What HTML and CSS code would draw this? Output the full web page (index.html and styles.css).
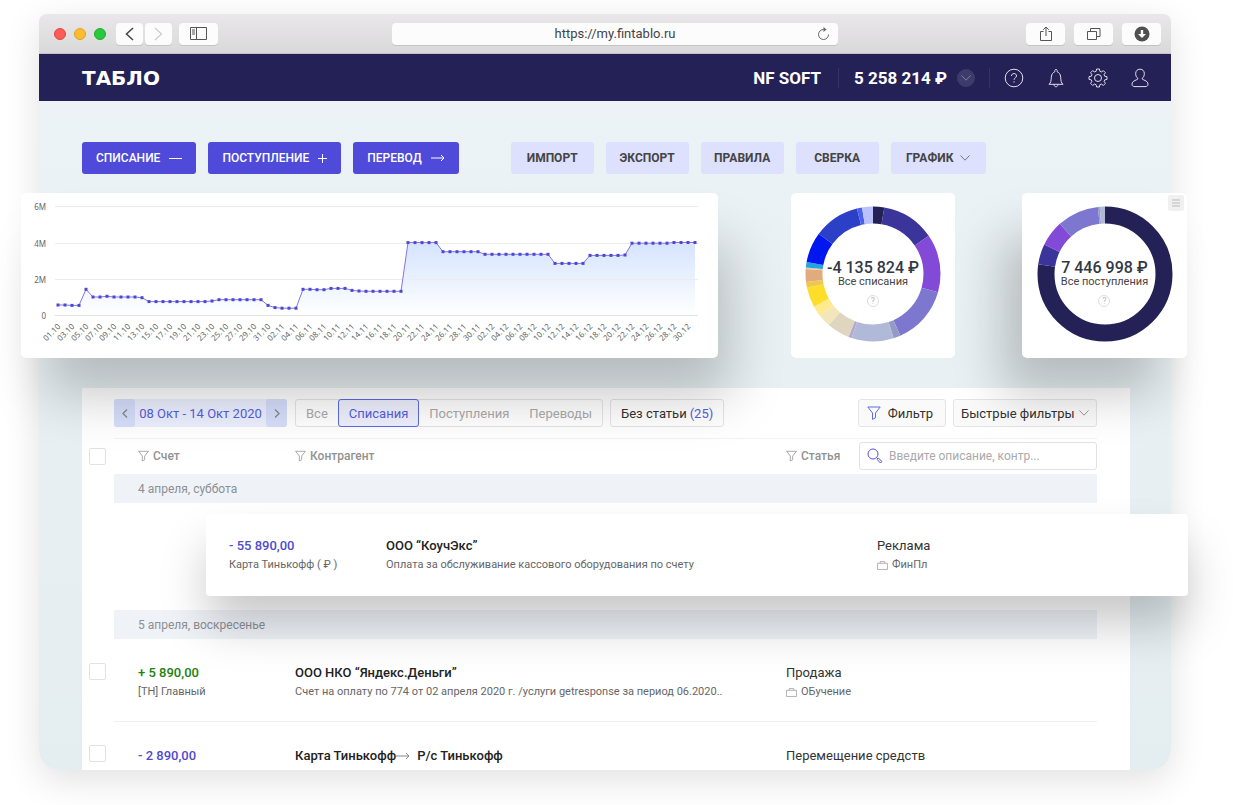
FILE: index.html
```html
<!DOCTYPE html>
<html lang="ru">
<head>
<meta charset="utf-8">
<meta name="viewport" content="width=device-width, initial-scale=1">
<title>Табло — NF SOFT</title>
<link rel="stylesheet" href="styles.css">
</head>
<body>
<svg class="sprite" aria-hidden="true">
  <symbol id="funnel" viewBox="0 0 14 14"><path d="M.8 1h12.400l-4.700 6v4.800l-3 1.500V7z" fill="none" stroke="currentColor" stroke-linejoin="round"/></symbol>
  <symbol id="case" viewBox="0 0 12 10"><path d="M.5 2.500h11v7H.5zM3.500 2.500v-2h5v2" fill="none" stroke="currentColor"/></symbol>
  <symbol id="down" viewBox="0 0 10 6"><path d="M.5.500 5 5.200 9.500.500" fill="none" stroke="currentColor"/></symbol>
  <symbol id="arrow" viewBox="0 0 14 8"><path d="M0 4h13M10 1l3 3-3 3" fill="none" stroke="currentColor"/></symbol>
</svg>

<div class="window">
  <div class="chrome">
    <div class="chrome-left">
      <div class="lights"><i class="light red"></i><i class="light yellow"></i><i class="light green"></i></div>
      <div class="history">
        <button class="chrome-btn narrow" aria-label="Назад"><svg width="9" height="14" viewBox="0 0 9 14"><path d="M8 1 1.500 7 8 13" fill="none" stroke="#444" stroke-width="1.500"/></svg></button>
        <button class="chrome-btn narrow" aria-label="Вперёд"><svg width="9" height="14" viewBox="0 0 9 14"><path d="m1 1 6.500 6L1 13" fill="none" stroke="#ccc" stroke-width="1.200"/></svg></button>
      </div>
      <button class="chrome-btn" aria-label="Боковая панель"><svg width="17" height="13" viewBox="0 0 17 13"><path d="M.5.500h16v12H.5zM6.500.500v12M2 3h3M2 5h3M2 7h3" fill="none" stroke="#555"/></svg></button>
    </div>
    <div class="address">
      <input type="text" value="https://my.fintablo.ru" aria-label="Адрес">
      <svg class="reload" width="13" height="14" viewBox="0 0 13 14"><path d="M11.500 7.500a5 5 0 1 1-5-5H8" fill="none" stroke="#666"/><path d="M6.500 0 9.500 2.500 6.500 5z" fill="#666"/></svg>
    </div>
    <div class="chrome-right">
      <button class="chrome-btn" aria-label="Поделиться"><svg width="14" height="16" viewBox="0 0 14 16"><path d="M4.500 5.500h-3v9h11v-9h-3M7 10V1M4.200 3.800 7 1l2.800 2.800" fill="none" stroke="#555"/></svg></button>
      <button class="chrome-btn" aria-label="Вкладки"><svg width="14" height="14" viewBox="0 0 14 14"><path d="M.5 4.500h9v8h-9zM3.500 4.500v-3h9.500v8H9.500" fill="none" stroke="#555"/></svg></button>
      <button class="chrome-btn" aria-label="Загрузки"><svg width="16" height="16" viewBox="0 0 16 16"><circle cx="8" cy="8" r="7.500" fill="#505050"/><path d="M6.800 4h2.400v4H12l-4 4-4-4h2.800z" fill="#fff"/></svg></button>
    </div>
  </div>

  <header class="nav">
    <a class="logo" href="#">ТАБЛО</a>
    <div class="company">NF SOFT</div>
    <div class="balance">5 258 214 ₽ <button class="round" aria-label="Счета"><svg width="10" height="6"><use href="#down"/></svg></button></div>
    <nav class="nav-icons">
      <a href="#" aria-label="Помощь"><svg width="20" height="20" viewBox="0 0 20 20"><circle cx="10" cy="10" r="8.800"/><path d="M7.500 8c0-3.300 5-3.300 5 0 0 1.800-2.500 2-2.500 3.800M10 13.300v1.300"/></svg></a>
      <a href="#" aria-label="Уведомления"><svg width="20" height="20" viewBox="0 0 20 20"><path d="M3 16.300h14c-2-1.800-2-3-2.300-7-.2-3.500-2-5-3.500-5.500C11.500.500 8.500.500 8.800 3.800 7.300 4.300 5.500 5.800 5.300 9.300c-.3 4-.3 5.200-2.300 7zM8 16.500c.2 3 3.800 3 4 0"/></svg></a>
      <a href="#" aria-label="Настройки"><svg width="20" height="20" viewBox="0 0 20 20"><path d="M8.600 1h2.800l.5 2.300 1.500.6 2-1.200 2 2-1.300 2 .6 1.500 2.300.5v2.700l-2.300.5-.6 1.500 1.300 2-2 2-2-1.300-1.500.6-.5 2.300H8.600l-.5-2.300-1.500-.6-2 1.300-2-2 1.300-2-.6-1.500L1 11.400V8.700l2.300-.5.600-1.500-1.300-2 2-2 2 1.200 1.500-.6z" stroke-linejoin="round"/><circle cx="10" cy="10" r="3.500"/></svg></a>
      <a href="#" aria-label="Профиль"><svg width="20" height="20" viewBox="0 0 20 20"><path d="M10 1.200c5.500 0 5.300 7.300 2 9.400 0 1.500 6 1.600 6 5.600 0 1.800-1.200 2.400-3 2.400H5c-1.800 0-3-.6-3-2.400 0-4 6-4.100 6-5.600C4.700 8.500 4.500 1.200 10 1.200z"/></svg></a>
    </nav>
  </header>

  <main class="content">
    <div class="actions">
      <div class="group">
        <button class="btn primary">СПИСАНИЕ <svg width="13" height="13" viewBox="0 0 13 13"><path d="M0 6.500h13" stroke="currentColor"/></svg></button>
        <button class="btn primary">ПОСТУПЛЕНИЕ <svg width="9" height="9" viewBox="0 0 9 9"><path d="M0 4.500h9M4.500 0v9" stroke="currentColor"/></svg></button>
        <button class="btn primary">ПЕРЕВОД <svg width="14" height="8"><use href="#arrow"/></svg></button>
      </div>
      <div class="group">
        <button class="btn">ИМПОРТ</button>
        <button class="btn">ЭКСПОРТ</button>
        <button class="btn">ПРАВИЛА</button>
        <button class="btn">СВЕРКА</button>
        <button class="btn wide">ГРАФИК <svg width="10" height="6"><use href="#down"/></svg></button>
      </div>
    </div>

    <section class="widgets">
      <div class="card chart"><svg id="chart" viewBox="0 0 697 165" role="img" aria-label="График остатка"></svg></div>
      <div class="card donut">
        <svg id="expenses" viewBox="0 0 136 136"></svg>
        <div class="donut-text"><strong>-4 135 824 ₽</strong><span>Все списания</span><i class="hint">?</i></div>
      </div>
      <div class="card donut lifted">
        <svg id="income" viewBox="0 0 136 136"></svg>
        <div class="donut-text"><strong>7 446 998 ₽</strong><span>Все поступления</span><i class="hint">?</i></div>
        <button class="menu" aria-label="Меню"><svg width="8" height="8" viewBox="0 0 8 8"><path d="M0 1h8M0 4h8M0 7h8" stroke="#bbb"/></svg></button>
      </div>
    </section>

    <section class="panel">
      <div class="filters">
        <div class="period">
          <button aria-label="Раньше"><svg width="6" height="9" viewBox="0 0 6 9"><path d="M5 .500 1 4.500l4 4" fill="none" stroke="#888" stroke-width="1.300"/></svg></button>
          <span>08 Окт - 14 Окт 2020</span>
          <button aria-label="Позже"><svg width="6" height="9" viewBox="0 0 6 9"><path d="m1 .500 4 4-4 4" fill="none" stroke="#888" stroke-width="1.300"/></svg></button>
        </div>
        <div class="segments">
          <button>Все</button><button class="active">Списания</button><button>Поступления</button><button>Переводы</button>
        </div>
        <button class="box">Без статьи <b>(25)</b></button>
        <button class="box filter"><svg width="14" height="14"><use href="#funnel"/></svg>Фильтр</button>
        <div class="quick">
          <select aria-label="Быстрые фильтры"><option>Быстрые фильтры</option></select>
          <svg width="10" height="6"><use href="#down"/></svg>
        </div>
      </div>

      <table class="table">
        <colgroup><col class="c-check"><col class="c-account"><col class="c-partner"><col></colgroup>
        <thead>
          <tr>
            <th><input type="checkbox" aria-label="Выбрать все"></th>
            <th class="first"><span class="head"><svg width="11" height="12"><use href="#funnel"/></svg>Счет</span></th>
            <th><span class="head"><svg width="11" height="12"><use href="#funnel"/></svg>Контрагент</span></th>
            <th>
              <div class="head-search">
                <span class="head"><svg width="11" height="12"><use href="#funnel"/></svg>Статья</span>
                <label class="search"><svg width="16" height="16" viewBox="0 0 16 16"><circle cx="6" cy="6" r="5"/><path d="m9.500 9.500 1.500 1.500M11.500 10.200l3.500 3.300-1.500 1.500-3.300-3.500z"/></svg><input type="text" placeholder="Введите описание, контр..." aria-label="Поиск"></label>
              </div>
            </th>
          </tr>
        </thead>
        <tbody>
          <tr class="day"><td></td><th colspan="3">4 апреля, суббота</th></tr>
          <tr class="raised-row">
            <td colspan="4">
              <div class="raised">
                <div><p class="amount out">- 55 890,00</p><p class="note">Карта Тинькофф ( ₽ )</p></div>
                <div><p class="title">ООО “КоучЭкс”</p><p class="note">Оплата за обслуживание кассового оборудования по счету</p></div>
                <div><p class="article">Реклама</p><p class="note"><svg width="11" height="9"><use href="#case"/></svg>ФинПл</p></div>
              </div>
            </td>
          </tr>
          <tr class="day"><td></td><th colspan="3">5 апреля, воскресенье</th></tr>
          <tr class="entry">
            <td><input type="checkbox" aria-label="Выбрать операцию"></td>
            <td class="first"><p class="amount in">+ 5 890,00</p><p class="note">[ТН] Главный</p></td>
            <td><p class="title">ООО НКО “Яндекс.Деньги”</p><p class="note">Счет на оплату по 774 от 02 апреля 2020 г. /услуги getresponse за период 06.2020..</p></td>
            <td><p class="article">Продажа</p><p class="note"><svg width="11" height="9"><use href="#case"/></svg>ОБучение</p></td>
          </tr>
          <tr class="entry last">
            <td><input type="checkbox" aria-label="Выбрать операцию"></td>
            <td class="first"><p class="amount out">- 2 890,00</p></td>
            <td><p class="title transfer">Карта Тинькофф<svg width="14" height="8"><use href="#arrow"/></svg><span>Р/с Тинькофф</span></p></td>
            <td><p class="article">Перемещение средств</p></td>
          </tr>
        </tbody>
      </table>
    </section>
  </main>
</div>
<script src="script.js"></script>
</body>
</html>
```
FILE: styles.css
```css
* { box-sizing: border-box; }
body { margin: 0; background: #fff; color: #333; font-family: Roboto, "Noto Sans", "Liberation Sans", sans-serif; font-size: 13px; }
button, input, select { font: inherit; color: inherit; margin: 0; }
button { padding: 0; border: 0; background: none; cursor: pointer; }
a { color: inherit; text-decoration: none; }
p { margin: 0; }
svg { display: block; flex: none; }
.sprite { position: absolute; width: 0; height: 0; }

.window { margin: 14px 62px 35px 39px; border-radius: 8px 8px 20px 20px; background: linear-gradient(#edf3f6, #e4edf0); box-shadow: 0 10px 36px rgba(0, 0, 0, .12); }

.chrome { display: grid; grid-template-columns: 353px minmax(0, 1fr) 333px; align-items: center; height: 40px; border-bottom: 1px solid #c4c3c8; border-radius: 8px 8px 0 0; background: linear-gradient(#e9e7e9, #dad9da); }
.chrome-left { display: flex; align-items: center; padding-left: 15px; }
.lights { display: flex; gap: 8px; margin-right: 10px; }
.light { width: 12px; height: 12px; border-radius: 50%; }
.red { background: #fc5b57; border: 1px solid #e2443f; }
.yellow { background: #fdbb2e; border: 1px solid #e0a128; }
.green { background: #28c83f; border: 1px solid #1dad2b; }
.history { display: flex; gap: 2px; margin-right: 7px; }
.chrome-btn { display: flex; align-items: center; justify-content: center; width: 39px; height: 22px; border-radius: 4px; background: #fcfcfc; box-shadow: 0 1px 0 #c5c4c5; }
.narrow { width: 27px; }
.address { display: flex; align-items: center; height: 22px; padding: 0 8px 0 21px; border-radius: 4px; background: #fcfcfc; box-shadow: 0 1px 0 #c5c4c5; }
.address input { flex: 1; min-width: 0; padding: 0; border: 0; background: none; text-align: center; color: #444; }
.chrome-right { display: flex; justify-content: flex-end; gap: 9px; padding-right: 10px; }

.nav { display: flex; align-items: center; height: 47px; padding: 0 21px 0 43px; background: #242157; color: #fff; font-size: 17px; font-weight: 700; }
.logo { font-family: "DejaVu Sans", sans-serif; font-size: 20px; }
.company { margin-left: auto; padding-right: 17px; border-right: 1px solid #35326a; }
.balance { display: flex; align-items: center; gap: 10px; padding: 0 14px 0 15px; border-right: 1px solid #35326a; }
.round { display: flex; align-items: center; justify-content: center; width: 18px; height: 18px; border-radius: 50%; background: #3d3a6c; color: #8080a0; }
.nav-icons { display: flex; gap: 22px; padding-left: 14px; }
.nav-icons svg { fill: none; stroke: #e0dfe8; stroke-width: 1; }

.content { padding: 41px 41px 0 43px; }
.actions { display: flex; gap: 52px; }
.group { display: flex; gap: 12px; }
.btn { display: flex; align-items: center; justify-content: center; min-width: 83px; height: 32px; border-radius: 3px; background: #dde1fd; color: #444; font-size: 12px; font-weight: 700; }
.btn.wide { min-width: 95px; gap: 7px; }
.btn.wide svg { color: #777; }
.btn.primary { gap: 9px; padding: 0 14px; background: #4f4ad9; color: #fff; font-weight: 500; }

.widgets { position: relative; z-index: 1; display: grid; grid-template-columns: minmax(0, 1fr) 164px 165px; gap: 67px; align-items: start; margin: 19px -57px 30px -61px; }
.card { border-radius: 5px; background: #fff; }
.chart { margin-right: 6px; box-shadow: 18px 44px 54px -6px rgba(0, 0, 0, .22); }
.chart svg { width: 100%; height: auto; }
.chart text { fill: #666; font-family: "Noto Sans", sans-serif; font-size: 8px; }
.donut { position: relative; display: grid; place-items: center; height: 165px; padding-bottom: 4px; }
.donut.lifted { box-shadow: -24px 40px 50px -4px rgba(0, 0, 0, .22); }
.donut > svg, .donut-text { grid-area: 1 / 1; }
.donut > svg { width: 136px; height: 136px; }
.donut-text { display: flex; flex-direction: column; align-items: center; padding-top: 20px; color: #444; font-size: 11px; line-height: 12px; }
.donut-text strong { color: #333845; font-size: 16px; font-weight: 500; line-height: 16px; }
.hint { display: flex; align-items: center; justify-content: center; width: 12px; height: 12px; margin-top: 7px; border: 1px solid #ddd; border-radius: 50%; color: #bbb; font-size: 9px; font-style: normal; }
.menu { position: absolute; top: 2px; right: 3px; display: flex; align-items: center; justify-content: center; width: 16px; height: 16px; border-radius: 2px; background: #f0f0f0; }

.panel { padding: 11px 33px 0 0; background: #fff; }
.filters { display: flex; gap: 7px; margin-left: 32px; padding-bottom: 11px; border-bottom: 1px solid #f3f3f3; }
.period, .segments, .box, .quick { display: flex; align-items: center; height: 28px; border-radius: 3px; }
.period { margin-right: 1px; width: 173px; background: #eceffe; color: #5560de; justify-content: space-between; }
.period button { display: flex; align-items: center; justify-content: center; width: 21px; height: 28px; border-radius: 3px; background: #d6defb; }
.segments, .box, .quick { border: 1px solid #e4e4e4; }
.segments button { height: 28px; padding: 0 10px; color: #aaa; }
.segments .active { border: 1px solid #5c6ae6; border-radius: 3px; background: #eff0fe; color: #5560de; }
.box { padding: 0 10px; }
.box b { margin-left: 3px; color: #5560de; font-weight: 400; }
.filter { gap: 7px; margin-left: auto; padding: 0 12px 0 8px; background: #fafafa; }
.filter svg { color: #5c6ae6; }
.quick { width: 144px; padding: 0 7px; background: #fafafa; color: #999; }
.quick select { flex: 1; min-width: 0; padding: 0; border: 0; background: none; appearance: none; color: #333; }

.table { width: 100%; border-collapse: collapse; table-layout: fixed; }
.c-check { width: 32px; }
.c-account { width: 181px; }
.c-partner { width: 491px; }
.table td, .table th { padding: 0; text-align: left; vertical-align: top; }
.table thead th { height: 35px; padding-bottom: 1px; vertical-align: middle; }
.table .first { padding-left: 24px; }
.table input[type="checkbox"] { display: block; appearance: none; width: 17px; height: 17px; margin-left: 7px; border: 1px solid #e2e2e2; border-radius: 2px; background: #fff; }
.head { display: flex; align-items: center; gap: 4px; color: #929292; font-size: 12px; font-weight: 500; }
.head-search { display: grid; grid-template-columns: 73px minmax(0, 1fr); align-items: center; }
.search { display: flex; align-items: center; gap: 6px; height: 28px; padding: 0 7px; border: 1px solid #e2e2e2; border-radius: 3px; }
.search svg { fill: none; stroke: #5a50d8; }
.search input { flex: 1; min-width: 0; padding: 0; border: 0; font-size: 12px; font-weight: 400; }
.search input::placeholder { color: #aaa; }
.day th { height: 29px; padding: 0 24px; background: #eff3f8; vertical-align: middle; color: #8c8f93; font-size: 12px; font-weight: 400; }
.raised { position: relative; display: grid; grid-template-columns: 157px 491px minmax(0, 1fr); height: 82px; margin: 11px -91px 14px 124px; padding: 22px 23px; border-radius: 4px; background: #fff; box-shadow: 0 30px 48px -2px rgba(0, 0, 0, .22); }
.amount, .title, .article { font-size: 13px; line-height: 20px; }
.amount { font-weight: 500; }
.title { font-weight: 500; color: #222; }
.note { display: flex; align-items: center; gap: 4px; color: #666; font-size: 11px; line-height: 18px; }
.note svg { color: #aaa; }
.out { color: #4f4ad0; }
.in { color: #22800c; }
.entry td { height: 82px; padding-top: 24px; border-bottom: 1px solid #f0f0f0; }
.entry td:first-child { border-bottom: 0; }
.entry.last td { height: 49px; border-bottom: 0; }
.transfer { display: flex; align-items: center; }
.transfer svg { color: #888; }
.transfer span { margin-left: 7px; }
```
FILE: script.js
```js
const NS = "http://www.w3.org/2000/svg";
function add(parent, name, attrs, text) {
  const el = document.createElementNS(NS, name);
  for (const key in attrs) el.setAttribute(key, attrs[key]);
  if (text) el.textContent = text;
  parent.appendChild(el);
  return el;
}

// Daily balance: [number of days, chart y]
const runs = [[2, 112], [2, 112.4], [1, 96.3], [2, 104], [1, 103.3], [4, 104], [1, 104.7], [9, 108.6], [1, 108], [7, 106.7],
  [1, 112.4], [1, 114.6], [3, 115.2], [2, 96.3], [2, 96.7], [3, 95.4], [1, 97.4], [1, 98], [6, 98.3], [5, 49.6], [6, 58.7],
  [10, 61.3], [5, 70.4], [5, 62.4], [1, 62], [6, 50.2], [4, 49.5]];
const points = runs.flatMap(([n, y]) => Array(n).fill(y)).map((y, i) => [37 + i * 7, y]);

const chart = document.getElementById("chart");
const grad = add(add(chart, "defs", {}), "linearGradient", { id: "fill", gradientUnits: "userSpaceOnUse", x1: 0, x2: 0, y1: 50, y2: 122 });
add(grad, "stop", { offset: 0, "stop-color": "#d5e4ff" });
add(grad, "stop", { offset: 1, "stop-color": "#fff" });
const line = points.map(p => p.join(" ")).join("L");
add(chart, "path", { d: `M37 122L${line}L674 122Z`, fill: "url(#fill)" });
[["6M", 13.5], ["4M", 50.5], ["2M", 86.5], ["0", 122.5]].forEach(([label, y]) => {
  add(chart, "path", { d: `M34 ${y}H677`, stroke: label === "0" ? "#e6e3dc" : "#ececec" });
  add(chart, "text", { x: 25, y: y + 3, "text-anchor": "end" }, label);
});
add(chart, "path", { d: `M${line}`, fill: "none", stroke: "#7d78e2" });
points.forEach(([x, y], i) => {
  add(chart, "rect", { x: x - 1.5, y: y - 1.5, width: 3, height: 3, fill: "#4f46d4" });
  if (i % 2 === 0) {
    const d = new Date(2020, 9, 1 + i);
    const label = String(d.getDate()).padStart(2, "0") + "." + (d.getMonth() + 1);
    add(chart, "text", { transform: `translate(${x + 3} 134) rotate(-45)`, "text-anchor": "end" }, label);
  }
});

// Rings: [end angle, colour]
function ring(id, parts) {
  const svg = document.getElementById(id);
  let start = 0;
  parts.forEach(([end, stroke]) => {
    add(svg, "circle", { cx: 68, cy: 68, r: 59, fill: "none", stroke, "stroke-width": 17, pathLength: 360,
      "stroke-dasharray": `${end - start} 360`, "stroke-dashoffset": -start, transform: "rotate(-90 68 68)" });
    start = end;
  });
}
ring("expenses", [[9.7, "#242157"], [55.6, "#3b359b"], [105.8, "#824ad6"], [156.1, "#7d77cf"], [162.1, "#9499c5"],
  [198.5, "#b1b9d9"], [201.2, "#b2a9cd"], [220.9, "#e0d6bf"], [231.9, "#f2e7ba"], [240.9, "#ffea8d"], [258.4, "#ffdd2b"],
  [263.2, "#ecc84e"], [274.3, "#e2ab7d"], [275.7, "#ecc9b0"], [280.3, "#22a5df"], [306.6, "#0018ef"], [346.2, "#2b3fc8"],
  [350.6, "#4b61ea"], [360, "#bbc2fb"]]);
ring("income", [[278.3, "#242157"], [295.9, "#3b359b"], [318, "#824ad6"], [353.8, "#7d77cf"], [355.4, "#9499c5"], [360, "#b1b9d9"]]);
```
